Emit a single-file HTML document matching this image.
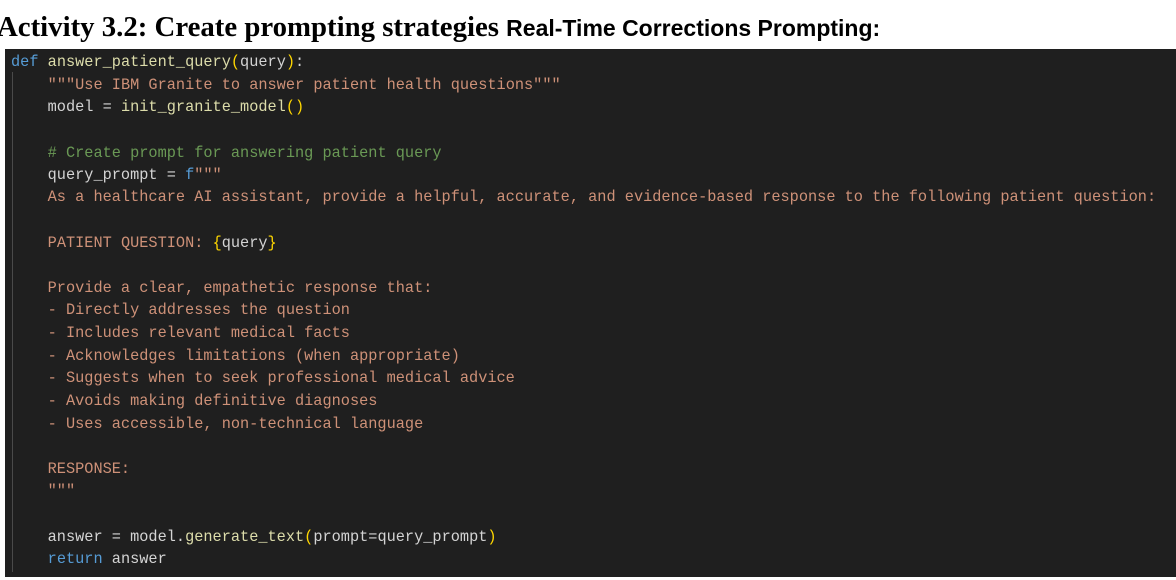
<!DOCTYPE html>
<html><head><meta charset="utf-8"><style>
body{margin:0;width:1176px;height:580px;background:#fff;position:relative;overflow:hidden}
.t{position:absolute;left:-3px;top:11px;white-space:nowrap;color:#000;font-weight:bold}
.t .a{font-family:"Liberation Serif",serif;font-size:28.8px}
.t .b{font-family:"Liberation Sans",sans-serif;font-size:23px}
.code{position:absolute;left:5px;top:49px;width:1171px;height:528px;background:#1f1f1f}
.g{position:absolute;left:12px;top:72px;width:1px;height:500px;background:#4a4a4a}
.l{position:absolute;left:11px;white-space:pre;font-family:"Liberation Mono",monospace;font-size:15.27px;line-height:22px;color:#d4d4d4}
.k{color:#569cd6}.f{color:#dcdcaa}.p{color:#ffd700}.s{color:#ce9178}.c{color:#6a9955}
</style></head><body>
<div class="t"><span class="a">Activity 3.2: Create prompting strategies </span><span class="b">Real-Time Corrections Prompting:</span></div>
<div class="code"></div>
<div class="g"></div>
<div class="l" style="top:51px"><span class="k">def</span> <span class="f">answer_patient_query</span><span class="p">(</span>query<span class="p">)</span>:</div>
<div class="l" style="top:74px">    <span class="s">"""Use IBM Granite to answer patient health questions"""</span></div>
<div class="l" style="top:96px">    model = <span class="f">init_granite_model</span><span class="p">()</span></div>
<div class="l" style="top:142px">    <span class="c"># Create prompt for answering patient query</span></div>
<div class="l" style="top:164px">    query_prompt = <span class="k">f</span><span class="s">"""</span></div>
<div class="l s" style="top:186px;color:#ce9178">    As a healthcare AI assistant, provide a helpful, accurate, and evidence-based response to the following patient question:</div>
<div class="l" style="top:232px">    <span class="s">PATIENT QUESTION: </span><span class="p">{</span>query<span class="p">}</span></div>
<div class="l" style="top:277px;color:#ce9178">    Provide a clear, empathetic response that:</div>
<div class="l" style="top:299px;color:#ce9178">    - Directly addresses the question</div>
<div class="l" style="top:322px;color:#ce9178">    - Includes relevant medical facts</div>
<div class="l" style="top:345px;color:#ce9178">    - Acknowledges limitations (when appropriate)</div>
<div class="l" style="top:367px;color:#ce9178">    - Suggests when to seek professional medical advice</div>
<div class="l" style="top:390px;color:#ce9178">    - Avoids making definitive diagnoses</div>
<div class="l" style="top:413px;color:#ce9178">    - Uses accessible, non-technical language</div>
<div class="l" style="top:458px;color:#ce9178">    RESPONSE:</div>
<div class="l" style="top:480px;color:#ce9178">    """</div>
<div class="l" style="top:526px">    answer = model.<span class="f">generate_text</span><span class="p">(</span>prompt=query_prompt<span class="p">)</span></div>
<div class="l" style="top:548px">    <span class="k">return</span> answer</div>
</body></html>
